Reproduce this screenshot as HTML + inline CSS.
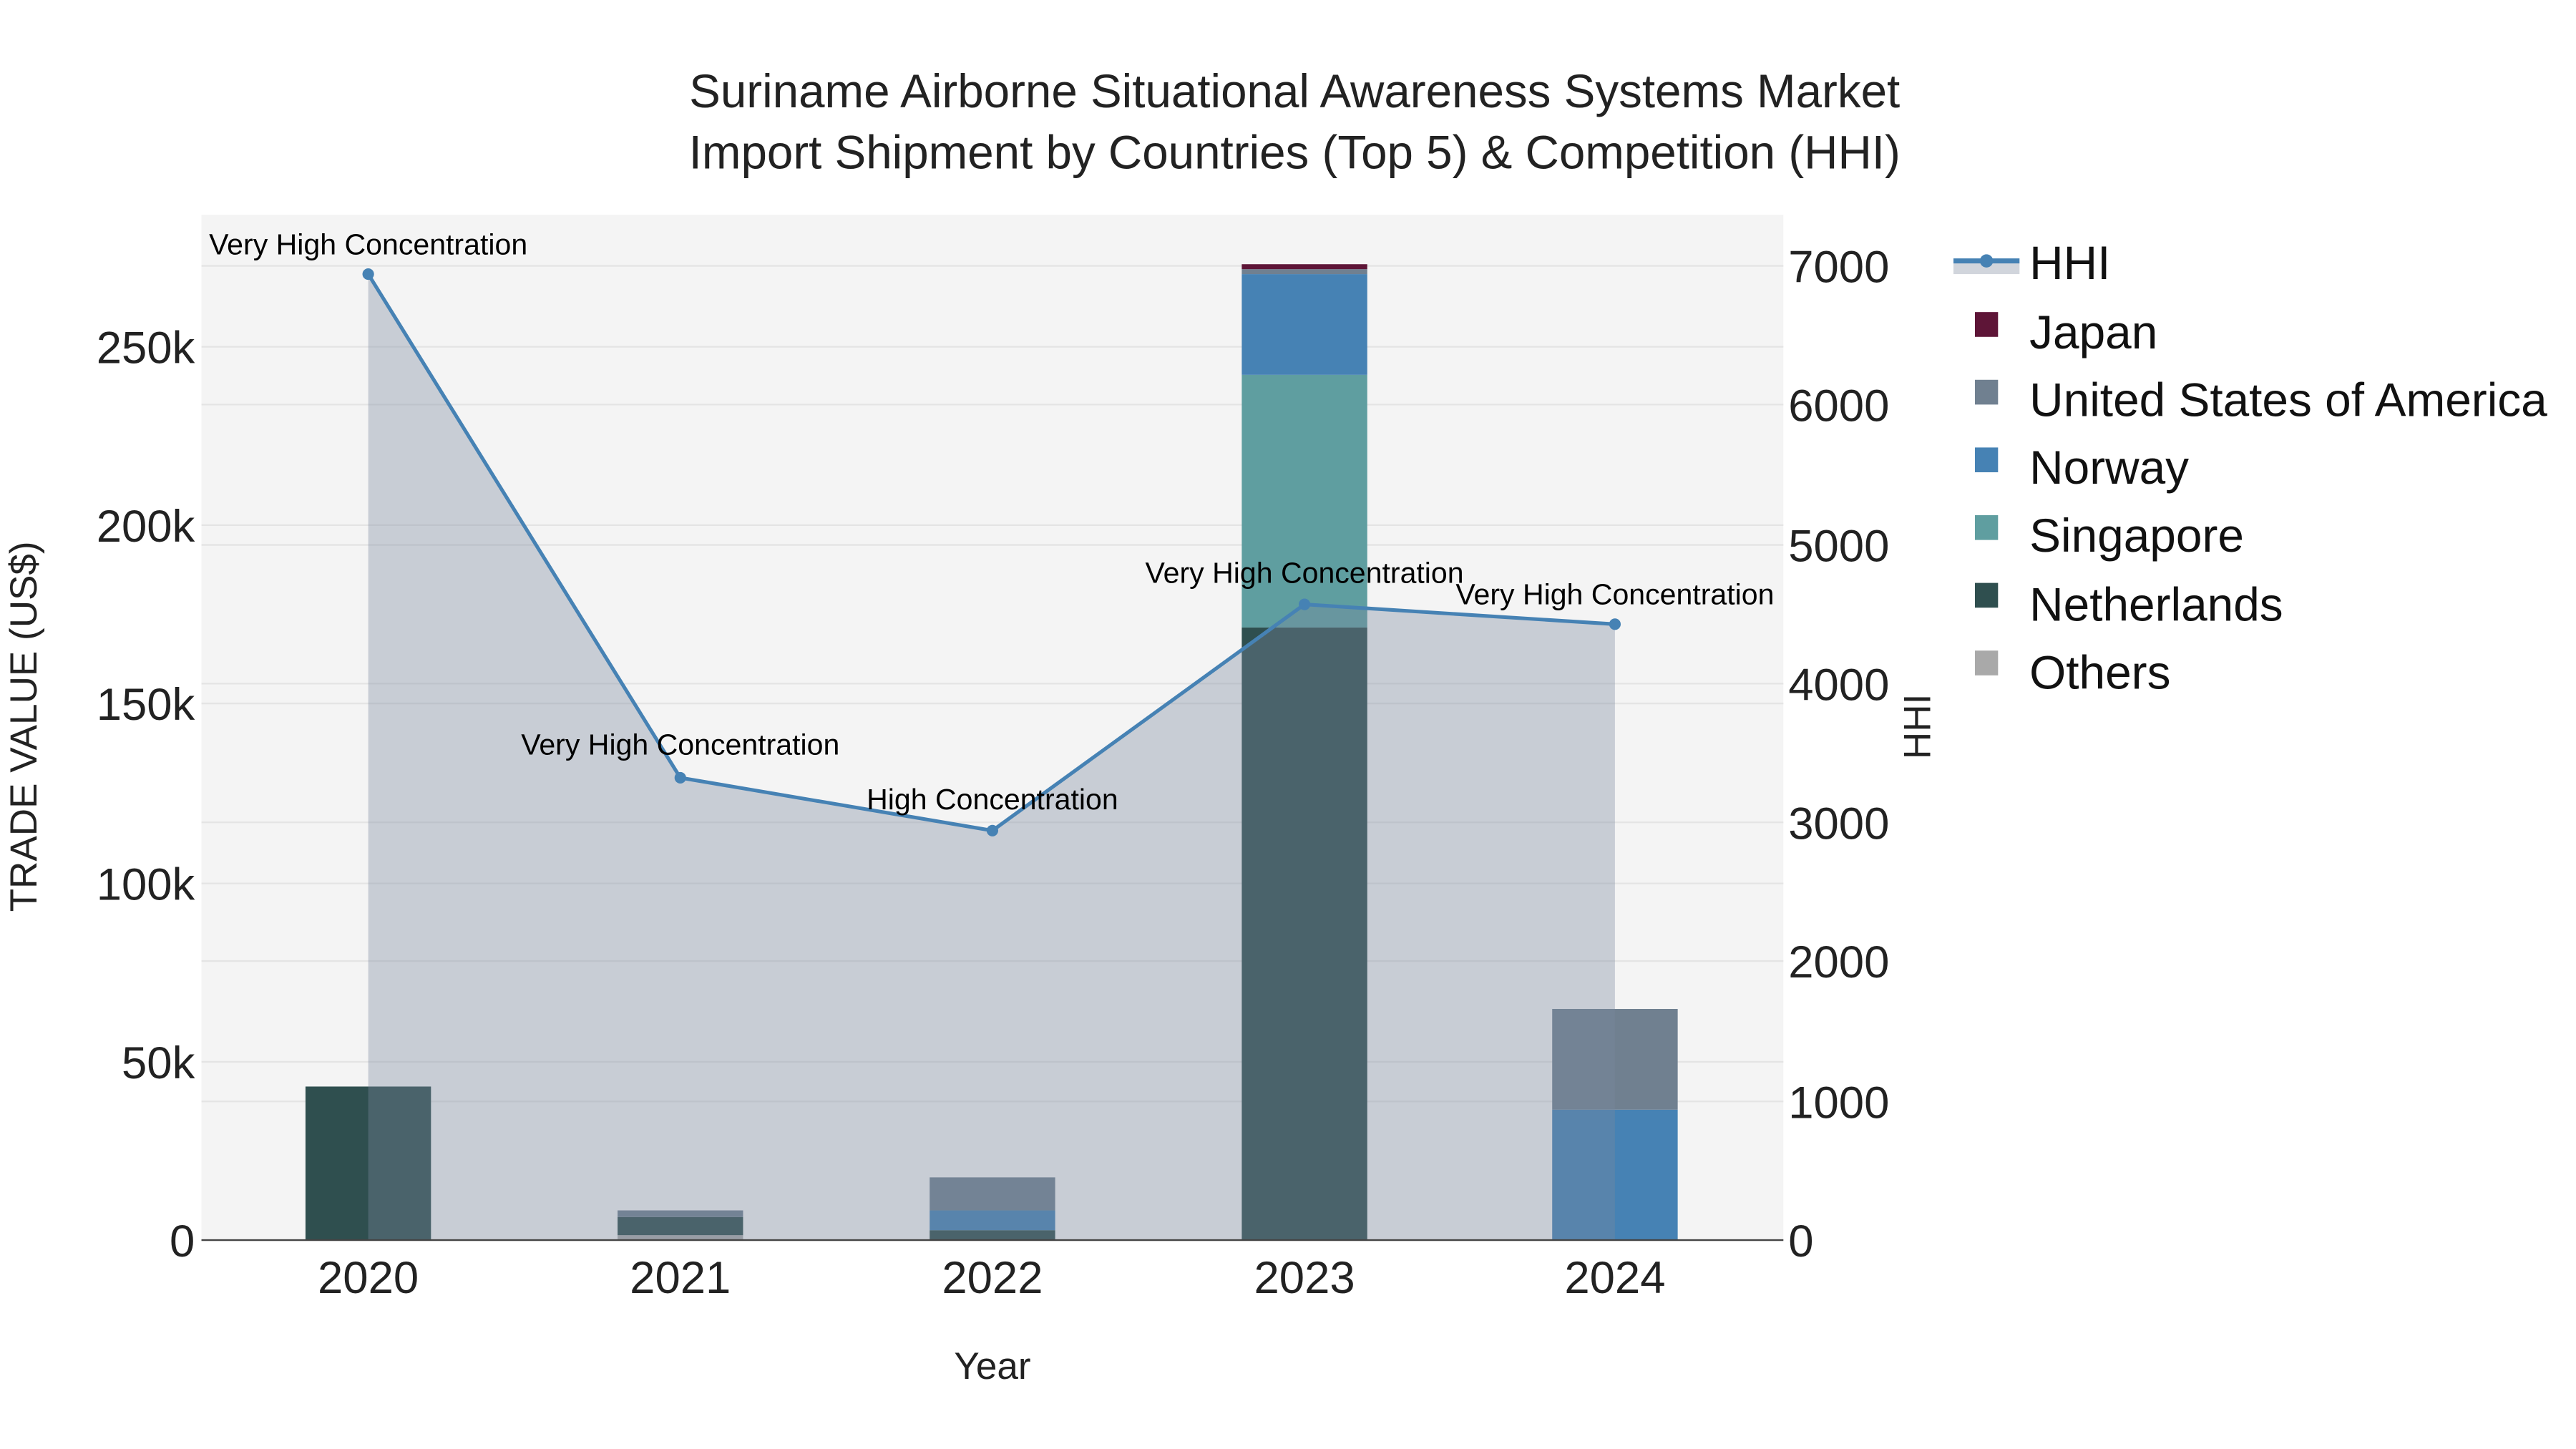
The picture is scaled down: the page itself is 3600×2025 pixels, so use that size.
<!DOCTYPE html>
<html><head><meta charset="utf-8"><style>html,body{margin:0;padding:0;background:#fff}svg{display:block}</style></head>
<body>
<svg width="3600" height="2025" viewBox="0 0 1560 877.5" xmlns="http://www.w3.org/2000/svg" font-family="Liberation Sans, Arial, sans-serif">
<rect x="0" y="0" width="1560" height="877.5" fill="#fff"/>
<rect x="122" y="130" width="958" height="621" fill="#f4f4f4"/>
<g stroke="#e4e4e4" stroke-width="1">
<line x1="122" x2="1080" y1="643" y2="643"/><line x1="122" x2="1080" y1="535" y2="535"/><line x1="122" x2="1080" y1="426" y2="426"/><line x1="122" x2="1080" y1="318" y2="318"/><line x1="122" x2="1080" y1="210" y2="210"/>
<line x1="122" x2="1080" y1="667" y2="667"/><line x1="122" x2="1080" y1="582" y2="582"/><line x1="122" x2="1080" y1="498" y2="498"/><line x1="122" x2="1080" y1="414" y2="414"/><line x1="122" x2="1080" y1="330" y2="330"/><line x1="122" x2="1080" y1="245" y2="245"/><line x1="122" x2="1080" y1="161" y2="161"/>
</g>
<rect x="185" y="658" width="76" height="93" fill="#2f4f4f"/>
<rect x="374" y="748" width="76" height="3" fill="#a9a9a9"/>
<rect x="374" y="737" width="76" height="11" fill="#2f4f4f"/>
<rect x="374" y="733" width="76" height="4" fill="#708090"/>
<rect x="563" y="745" width="76" height="6" fill="#2f4f4f"/>
<rect x="563" y="733" width="76" height="12" fill="#4682b4"/>
<rect x="563" y="713" width="76" height="20" fill="#708090"/>
<rect x="752" y="380" width="76" height="371" fill="#2f4f4f"/>
<rect x="752" y="227" width="76" height="153" fill="#5f9ea0"/>
<rect x="752" y="166" width="76" height="61" fill="#4682b4"/>
<rect x="752" y="163" width="76" height="3" fill="#708090"/>
<rect x="752" y="160" width="76" height="3" fill="#5e1537"/>
<rect x="940" y="672" width="76" height="79" fill="#4682b4"/>
<rect x="940" y="611" width="76" height="61" fill="#708090"/>
<path d="M223,751 L223,166 L412,471 L601,503 L790,366 L978,378 L978,751 Z" fill="rgb(122,135,158)" fill-opacity="0.36"/>
<polyline points="223,166 412,471 601,503 790,366 978,378" fill="none" stroke="#4682b4" stroke-width="2.2"/>
<g fill="#4682b4"><circle cx="223" cy="166" r="3.5"/><circle cx="412" cy="471" r="3.5"/><circle cx="601" cy="503" r="3.5"/><circle cx="790" cy="366" r="3.5"/><circle cx="978" cy="378" r="3.5"/></g>
<line x1="122" x2="1080" y1="751" y2="751" stroke="#444" stroke-width="1"/>
<g font-size="17.8" fill="#000" text-anchor="middle">
<text x="223" y="154">Very High Concentration</text>
<text x="412" y="457">Very High Concentration</text>
<text x="601" y="490">High Concentration</text>
<text x="790" y="353">Very High Concentration</text>
<text x="978" y="366">Very High Concentration</text>
</g>
<g font-size="28.4" fill="#222" text-anchor="middle">
<text x="784" y="65">Suriname Airborne Situational Awareness Systems Market</text>
<text x="784" y="102">Import Shipment by Countries (Top 5) &amp; Competition (HHI)</text>
</g>
<g font-size="27.5" fill="#222" text-anchor="end">
<text x="118" y="761">0</text><text x="118" y="653">50k</text><text x="118" y="545">100k</text><text x="118" y="436">150k</text><text x="118" y="328">200k</text><text x="118" y="220">250k</text>
</g>
<g font-size="27.5" fill="#222">
<text x="1083" y="761">0</text><text x="1083" y="677">1000</text><text x="1083" y="592">2000</text><text x="1083" y="508">3000</text><text x="1083" y="424">4000</text><text x="1083" y="340">5000</text><text x="1083" y="255">6000</text><text x="1083" y="171">7000</text>
</g>
<g font-size="27.5" fill="#222" text-anchor="middle">
<text x="223" y="783">2020</text><text x="412" y="783">2021</text><text x="601" y="783">2022</text><text x="790" y="783">2023</text><text x="978" y="783">2024</text>
</g>
<text x="601" y="835" font-size="23" fill="#222" text-anchor="middle">Year</text>
<text transform="translate(22,440) rotate(-90)" font-size="23" fill="#222" text-anchor="middle">TRADE VALUE (US$)</text>
<text transform="translate(1169,440) rotate(-90)" font-size="23" fill="#222" text-anchor="middle">HHI</text>
<rect x="1183" y="159" width="40" height="7" fill="#d1d5dc"/>
<line x1="1183" x2="1223" y1="158" y2="158" stroke="#4682b4" stroke-width="3"/>
<circle cx="1203" cy="158" r="4" fill="#4682b4"/>
<g font-size="28.5" fill="#111">
<text x="1229" y="169">HHI</text>
<text x="1229" y="211">Japan</text>
<text x="1229" y="252">United States of America</text>
<text x="1229" y="293">Norway</text>
<text x="1229" y="334">Singapore</text>
<text x="1229" y="376">Netherlands</text>
<text x="1229" y="417">Others</text>
</g>
<rect x="1196" y="189" width="14" height="15" fill="#5e1537"/>
<rect x="1196" y="230" width="14" height="15" fill="#708090"/>
<rect x="1196" y="271" width="14" height="15" fill="#4682b4"/>
<rect x="1196" y="312" width="14" height="15" fill="#5f9ea0"/>
<rect x="1196" y="353" width="14" height="15" fill="#2f4f4f"/>
<rect x="1196" y="394" width="14" height="15" fill="#a9a9a9"/>
</svg>
</body></html>
